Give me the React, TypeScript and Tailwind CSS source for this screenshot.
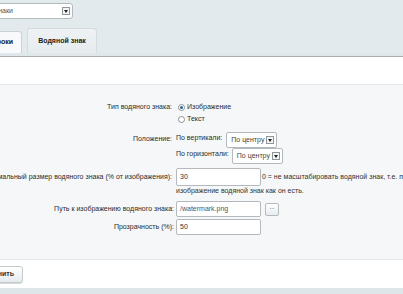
import React from "react";

function Arrow() {
  return (
    <span className="flex h-[8px] w-[8px] shrink-0 items-center justify-center border border-[#8f9699] bg-[#f2f4f5]">
      <svg width="4" height="3" viewBox="0 0 4 3">
        <path d="M0 0 L4 0 L2 3 Z" fill="#222" />
      </svg>
    </span>
  );
}

function Radio({ checked }: { checked?: boolean }) {
  return (
    <span className="flex h-[7px] w-[7px] items-center justify-center rounded-full border border-[#8a9296] bg-white">
      {checked && <span className="h-[3px] w-[3px] rounded-full bg-[#2c5f92]" />}
    </span>
  );
}

function Select({ text }: { text: string }) {
  return (
    <div className="flex h-[16px] w-[51px] items-center justify-between rounded-[2px] border border-[#b3b9bc] bg-white pl-[4px] pr-[2px] text-[7px] text-[#444]">
      <span className="whitespace-nowrap">{text}</span>
      <Arrow />
    </div>
  );
}

function Input({ value, h = 16, color = "#444" }: { value: string; h?: number; color?: string }) {
  return (
    <div
      className="flex w-[85px] shrink-0 items-center rounded-[2px] border border-[#b3b9bc] bg-white pl-[3px] text-[7px]"
      style={{ height: h, color }}
    >
      {value}
    </div>
  );
}

export default function App() {
  return (
    <div
      className="relative h-[294px] w-[403px] overflow-hidden bg-white text-[7px] text-[#2b2b2b]"
      style={{ fontFamily: '"Liberation Sans", Arial, sans-serif' }}
    >
      {/* top area */}
      <div className="h-[53px] bg-[#e3eaed] pt-[3px]">
        <div className="ml-[-40px] flex h-[16px] w-[113px] items-center justify-between rounded-[3px] border border-[#b3b9bc] bg-white pl-[3px] pr-[2px] text-[7px] text-[#555]">
          <span className="whitespace-nowrap pt-[1px]">Водяные знаки</span>
          <Arrow />
        </div>
        <div className="mt-[9px] flex items-end gap-[5px]">
          <div className="ml-[-30px] flex h-[22px] w-[52px] items-center justify-end rounded-t-[3px] border border-b-0 border-[#c9d2d5] bg-[#f7f9fa] pr-[8px] font-bold text-[#222]">
            <span className="whitespace-nowrap">Строки</span>
          </div>
          <div className="flex h-[25px] w-[70px] items-center justify-center rounded-t-[3px] border border-b-0 border-[#d3dbde] bg-gradient-to-b from-[#eef2f4] to-[#e6ecee] font-bold text-[#222]">
            Водяной знак
          </div>
        </div>
      </div>
      <div className="h-[3px] bg-[#dfe7ea]" />
      <div className="h-[1px] bg-[#a9adaf]" />
      {/* white gap */}
      <div className="h-[27px]" />
      {/* form */}
      <div className="h-[176px] border-y border-[#e1e6e8] bg-[#f5f7f8] pt-[16px]">
        {/* row 1 */}
        <div className="flex">
          <div className="flex h-[12px] w-[176px] items-center justify-end pr-[4px]">Тип водяного знака:</div>
          <div className="flex flex-col">
            <div className="flex h-[12px] items-center gap-[1px] pl-[2px]">
              <Radio checked />
              <span className="ml-[1px]">Изображение</span>
            </div>
            <div className="flex h-[12px] items-center gap-[1px] pl-[2px]">
              <Radio />
              <span className="ml-[1px]">Текст</span>
            </div>
          </div>
        </div>
        {/* row 2 */}
        <div className="mt-[7px] flex">
          <div className="flex h-[14px] w-[176px] items-center justify-end pr-[4px]">Положение:</div>
          <div className="flex flex-col">
            <div className="flex h-[16px] items-center gap-[4px]">
              <span className="-mt-[3px]">По вертикали:</span>
              <Select text="По центру" />
            </div>
            <div className="flex h-[16px] items-center gap-[3px]">
              <span className="-mt-[3px]">По горизонтали:</span>
              <Select text="По центру" />
            </div>
          </div>
        </div>
        {/* row 3 */}
        <div className="mt-[4px] flex">
          <div className="flex h-[18px] w-[176px] items-center justify-end whitespace-nowrap pr-[4px]">
            Максимальный размер водяного знака (% от изображения):
          </div>
          <div className="flex flex-col">
            <div className="flex items-center">
              <Input value="30" h={18} color="#333" />
              <span className="ml-[1px] whitespace-nowrap text-[#333]">
                0 = не масштабировать водяной знак, т.е. поместить на
              </span>
            </div>
            <div className="mt-[1px] whitespace-nowrap leading-[8px] text-[#333]">
              изображение водяной знак как он есть.
            </div>
          </div>
        </div>
        {/* row 4 */}
        <div className="mt-[6px] flex">
          <div className="flex h-[16px] w-[176px] items-center justify-end pr-[2px]">Путь к изображению водяного знака:</div>
          <div className="flex items-center gap-[4px]">
            <Input value="/watermark.png" color="#555" />
            <div className="flex h-[13px] w-[14px] items-center justify-center rounded-[2px] border border-[#b3b9bc] bg-gradient-to-b from-white to-[#e8ecee] pb-[3px] text-[6px] text-[#333]">
              ...
            </div>
          </div>
        </div>
        {/* row 5 */}
        <div className="mt-[2px] flex">
          <div className="flex h-[16px] w-[176px] items-center justify-end pr-[2px]">Прозрачность (%):</div>
          <Input value="50" color="#333" />
        </div>
      </div>
      {/* bottom */}
      <div className="h-[28px] pt-[6px]">
        <div className="ml-[-30px] flex h-[17px] w-[53px] items-center justify-end rounded-[3px] border border-[#c3cacd] bg-gradient-to-b from-white to-[#e6ebed] pr-[8px] font-bold text-[#333] shadow-[0_1px_0_#d5dadc]">
          <span className="whitespace-nowrap">Сохранить</span>
        </div>
      </div>
      <div className="h-[8px] bg-[#dde6e9]" />
    </div>
  );
}
